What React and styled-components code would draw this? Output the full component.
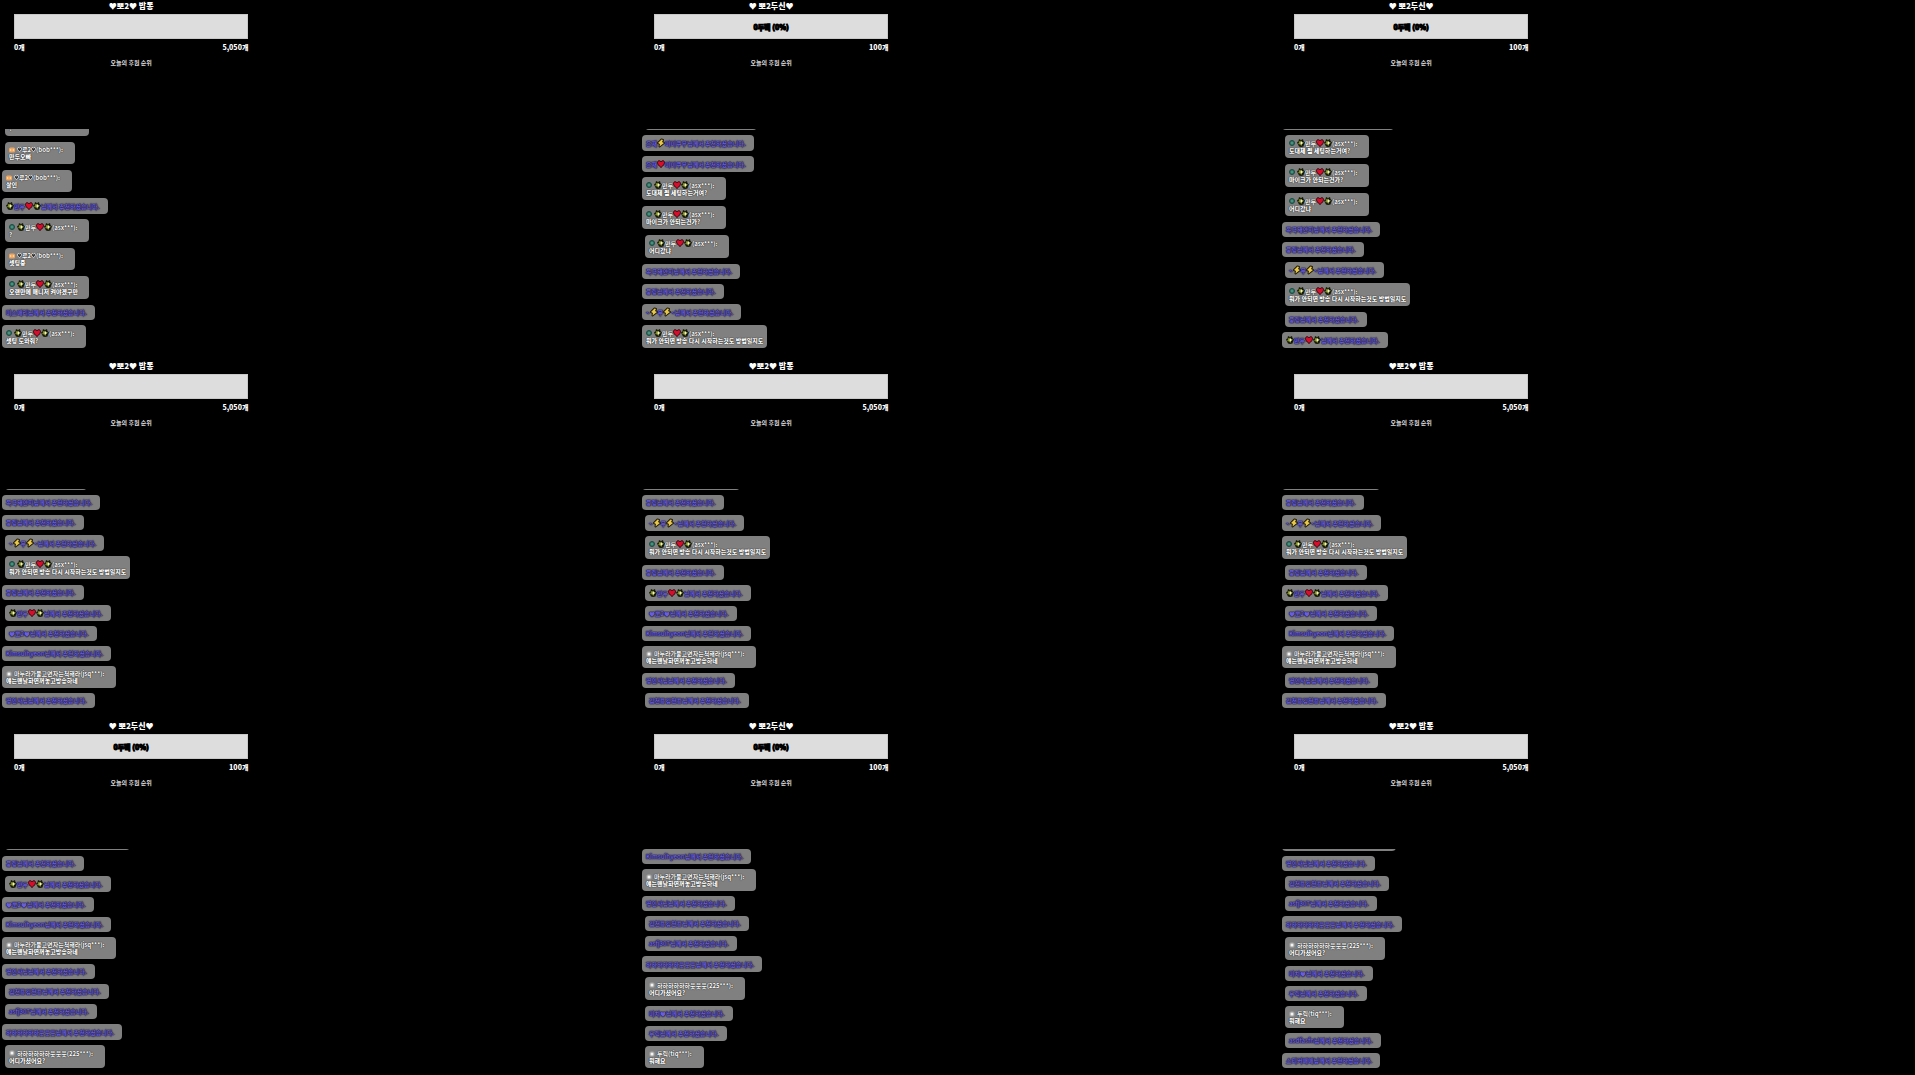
import React from "react";
import styled, { createGlobalStyle } from "styled-components";

const GlobalStyle = createGlobalStyle`
    * {
        box-sizing: border-box;
    }

    body {
        margin: 0;
        background: #000;
        font-family: "Noto Sans CJK KR", "Noto Sans", sans-serif;
    }
`;

const Wall = styled.main`
    display: grid;
    grid-template-columns: repeat(3, 1fr);
    column-gap: 5px;
    row-gap: 12px;
`;

const Panel = styled.section`
    display: flex;
    flex-direction: column;
    min-width: 0;
`;

const Goal = styled.header`
    display: flex;
    flex-direction: column;
    width: 41%;
    height: 129px;
    padding: 0 12px 0 14px;
    color: #fff;
    font-weight: 900;
`;

const GoalTitle = styled.h2`
    height: 14px;
    margin: 0;
    text-align: center;
    font-size: 8px;
    font-weight: 900;
    line-height: 12px;
    white-space: pre;
`;

const GoalBar = styled.div`
    display: flex;
    align-items: center;
    justify-content: center;
    height: 25px;
    border: 1px solid #c8c8c8;
    background: #ddd;
    color: #000;
    font-size: 7px;
    line-height: 10px;
    -webkit-text-stroke: 1px #000;
`;

const GoalRange = styled.div`
    display: flex;
    justify-content: space-between;
    padding-top: 3px;
    font-size: 7px;
    line-height: 11px;
`;

const Ranking = styled.p`
    margin: 6px 0 0;
    text-align: center;
    color: #ddd;
    font-size: 6px;
    font-weight: 700;
    line-height: 8px;
`;

const Chat = styled.ul`
    display: flex;
    flex-direction: column;
    justify-content: flex-end;
    align-items: flex-start;
    gap: 5px;
    height: 219px;
    margin: 0;
    padding: 0;
    overflow: hidden;
    list-style: none;
`;

const Bubble = styled.li`
    flex: none;
    margin-left: ${(props) => (props.$far ? "5px" : "2px")};
    padding: 4px;
    border-radius: 4px;
    background: #808080;
    font-size: 6px;
    font-weight: 700;
    line-height: 7px;
    white-space: nowrap;
`;

const TalkBubble = styled(Bubble)`
    margin-bottom: ${(props) => (props.$loose ? "1px" : "0")};
    color: #fff;
    text-shadow: 0 0 1px #111, 0 0 1px #222;

    &:last-child {
        margin-bottom: 0;
    }
`;

const CheerBubble = styled(Bubble)`
    padding-right: 8px;
    color: #6a5ed8;
    text-shadow: 0 0 1px #1e1a44, 0 0 1px #1e1a44, 0 0 1px #1e1a44, 0 0 2px #1e1a44;
`;

const Line = styled.div`
    display: flex;
    align-items: center;
    height: ${(props) => (props.$tall ? "8px" : "7px")};
`;

const NameLine = styled(Line)`
    padding-right: 8px;
`;

const TextLine = styled(Line)`
    font-weight: 900;
`;

const Glyph = styled.svg`
    flex: none;
    width: ${(props) => props.$size || 8}px;
    height: ${(props) => props.$size || 8}px;
    overflow: visible;
`;

const Badge = styled(Glyph)`
    margin-right: 2px;
`;

const Star = () => (
    <Glyph viewBox="0 0 16 16" aria-hidden="true">
        <path d="M4 0l4 2 4-2 1 4 3 3-2 4-1 4-5 1-4-1-2-4-2-4 3-3z" fill="#15170a" />
        <path d="M8 3l2 3 4 1-4 3-1 4-3-3-4-1 2-3-1-4 3 2z" fill="#7e8c24" />
        <path d="M9 4l1 3 3 1-3 1-1 3-1-3-3-1 3-1z" fill="#fffbd0" />
    </Glyph>
);

const Heart = () => (
    <Glyph viewBox="0 0 16 16" aria-hidden="true">
        <path
            d="M8 15C3 11 1 8 1 5c0-4 5-5 7-1 2-4 7-3 7 1 0 3-2 6-7 10z"
            fill="#d80d2c"
            stroke="#28060c"
            strokeWidth="2"
        />
    </Glyph>
);

const Zap = () => (
    <Glyph viewBox="0 0 16 16" aria-hidden="true">
        <path
            d="M9 1L2 8l4 2-1 5 9-7-4-2 2-4z"
            fill="#e8c84a"
            stroke="#211a06"
            strokeWidth="4"
            strokeLinejoin="round"
            paintOrder="stroke"
        />
    </Glyph>
);

const HollowHeart = () => (
    <Glyph $size={5} viewBox="0 0 12 12" aria-hidden="true">
        <path
            d="M6 11C2 8 1 6 1 4c0-3 4-4 5-1 1-3 5-2 5 1 0 2-1 4-5 7z"
            fill="#333"
            stroke="#f0f0f0"
            strokeWidth="2"
        />
    </Glyph>
);

const FanBadge = () => (
    <Badge $size={6} viewBox="0 0 12 12" aria-hidden="true">
        <rect y="1" width="12" height="10" rx="3" fill="#f0a45c" />
        <path d="M3 4v4M5 6h2M9 4v4" stroke="#ffe3bd" strokeWidth="1.5" />
    </Badge>
);

const ManagerBadge = () => (
    <Badge $size={6} viewBox="0 0 12 12" aria-hidden="true">
        <circle cx="6" cy="6" r="5" fill="#2f7a68" stroke="#1b4a40" strokeWidth="2" />
        <circle cx="6" cy="6" r="2" fill="#5c9486" />
    </Badge>
);

const GuestBadge = () => (
    <Badge $size={6} viewBox="0 0 12 12" aria-hidden="true">
        <rect x="1" y="1" width="10" height="10" rx="3" fill="#a8a8a8" />
        <circle cx="6" cy="6" r="3" fill="#f4f4f4" />
    </Badge>
);

const glyphs = { "✨": Star, "❤": Heart, "⚡": Zap, "♡": HollowHeart };
const badges = { fan: FanBadge, manager: ManagerBadge, guest: GuestBadge };

const isTall = (text) => /[✨❤⚡웃]/.test(text);

const Rich = ({ text }) =>
    text
        .split(/([✨❤⚡♡])/)
        .filter(Boolean)
        .map((part, index) => {
            const Icon = glyphs[part];
            return Icon ? <Icon key={index} /> : <span key={index}>{part}</span>;
        });

const cheer = (name) => ({ name });
const talk = (badge, name, text) => ({ badge, name, text });

const bob = (text) => talk("fan", "♡루2♡(bob***):", text);
const mandu = (text) => talk("manager", "✨만두❤✨(asx***):", text);

const setting = mandu("도대체 뭘 세팅하는거여?");
const mic = mandu("마이크가 안되는건가?");
const where = mandu("어디갔냐");
const restart = mandu("뭐가 안되면 방송 다시 시작하는것도 방법일지도");
const wife = talk("guest", "마누라가물고면자는척해라(jsq***):", "얘는맨날화면꺼놓고방송하네");
const haha = talk("guest", "하하하하하하웃웃웃(225***):", "어디가셨어요?");
const durik = talk("guest", "두릭(tiq***):", "뭐해요");

const zapCouple = cheer("은재⚡미미쿠부");
const heartCouple = cheer("은재❤미미쿠부");
const mokguk = cheer("목극해안지");
const pung = cheer("풍링");
const zaps = cheer("~⚡무⚡~");
const manduCheer = cheer("✨만두❤✨");
const ppo = cheer("♥뽀2♥");
const kim = cheer("Kimsuihyeon");
const myung = cheer("명인사님");
const yong = cheer("김천용김천용");
const asfj = cheer("asfj307");
const hahaCheer = cheer("하하하하하하웃웃웃");
const michi = cheer("미치♥");
const durikCheer = cheer("두릭");

const riceGoal = { title: "♥뽀2♥ 밥통", max: "5,050개" };
const duGoal = { title: "♥ 뽀2두신♥", max: "100개", progress: "0두팩 (0%)" };

// "f" marks a bubble that sits further from the left edge
const panels = [
    {
        goal: riceGoal,
        shifts: "ffnnfffnn",
        messages: [mandu("?"), bob("만두오빠"), bob("살인"), manduCheer, mandu("?"), bob("셋팅중"), mandu("오랜만에 매니저 켜야겠구만"), cheer("미스매리"), mandu("셋팅 도와줘?")],
    },
    {
        goal: duGoal,
        shifts: "fnnnnfnnnn",
        messages: [zapCouple, zapCouple, heartCouple, setting, mic, where, mokguk, pung, zaps, restart],
    },
    {
        goal: duGoal,
        shifts: "nfffnnfffn",
        messages: [heartCouple, setting, mic, where, mokguk, pung, zaps, restart, pung, manduCheer],
    },
    {
        goal: riceGoal,
        shifts: "fnnffnffnnn",
        messages: [pung, mokguk, pung, zaps, restart, pung, manduCheer, ppo, kim, wife, myung],
    },
    {
        goal: riceGoal,
        shifts: "nnffnffnnnf",
        messages: [mokguk, pung, zaps, restart, pung, manduCheer, ppo, kim, wife, myung, yong],
    },
    {
        goal: riceGoal,
        shifts: "nnnnfnffnfn",
        messages: [mokguk, pung, zaps, restart, pung, manduCheer, ppo, kim, wife, myung, yong],
    },
    {
        goal: duGoal,
        shifts: "fnfnnnnffnf",
        messages: [restart, pung, manduCheer, ppo, kim, wife, myung, yong, asfj, hahaCheer, haha],
    },
    {
        goal: duGoal,
        shifts: "nnnffnffff",
        messages: [kim, wife, myung, yong, asfj, hahaCheer, haha, michi, durikCheer, durik],
    },
    {
        goal: riceGoal,
        shifts: "nnffnfffffn",
        messages: [wife, myung, yong, asfj, hahaCheer, haha, michi, durikCheer, durik, cheer("asdfasfn"), cheer("스티커매매")],
    },
];

const Message = ({ message, far }) => {
    const tall = isTall(message.name);

    if (!message.text) {
        return (
            <CheerBubble $far={far}>
                <Line $tall={tall}>
                    <Rich text={message.name} />
                    <span>님께서 추천하셨습니다.</span>
                </Line>
            </CheerBubble>
        );
    }

    const BadgeIcon = badges[message.badge];

    return (
        <TalkBubble $far={far} $loose={tall || message.badge === "fan"}>
            <NameLine $tall={tall}>
                <BadgeIcon />
                <Rich text={message.name} />
            </NameLine>
            <TextLine>{message.text}</TextLine>
        </TalkBubble>
    );
};

const App = () => {
    return (
        <>
            <GlobalStyle />
            <Wall>
                {panels.map(({ goal, shifts, messages }, index) => (
                    <Panel key={index}>
                        <Goal>
                            <GoalTitle>{goal.title}</GoalTitle>
                            <GoalBar>{goal.progress}</GoalBar>
                            <GoalRange>
                                <span>0개</span>
                                <span>{goal.max}</span>
                            </GoalRange>
                            <Ranking>오늘의 후원 순위</Ranking>
                        </Goal>
                        <Chat>
                            {messages.map((message, i) => (
                                <Message key={i} message={message} far={shifts[i] === "f"} />
                            ))}
                        </Chat>
                    </Panel>
                ))}
            </Wall>
        </>
    );
};

export default App;
